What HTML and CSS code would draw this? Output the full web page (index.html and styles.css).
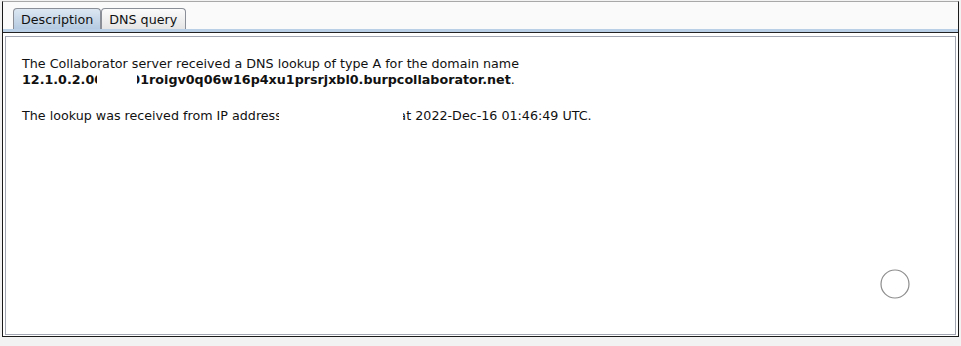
FILE: index.html
```html
<!DOCTYPE html>
<html>
<head>
<meta charset="utf-8">
<link rel="stylesheet" href="styles.css">
</head>
<body>
<div class="frame">
  <div class="tabs">
    <div class="tab active">Description</div>
    <div class="tab">DNS query</div>
  </div>
  <div class="strip"></div>
  <div class="panel">
    <div class="inner">
      <p class="para">The Collaborator server received a DNS lookup of type A for the domain name<br><b>12.1.0.2.0<span class="cut cut-r">0</span><span class="gap g1"></span><span class="cut cut-l"><span>0</span></span>1roigv0q06w16p4xu1prsrjxbl0.burpcollaborator.net</b>.</p>
      <p class="para">The lookup was received from IP addres<span class="cut cut-s">s</span><span class="gap g2"></span><span class="cut cut-a"><span>a</span></span>t 2022-Dec-16 01:46:49 UTC.</p>
      <svg class="spinner" width="30" height="30" viewBox="0 0 30 30"><circle cx="15" cy="15" r="14" fill="none" stroke="#8c8c8c" stroke-width="1.2"/></svg>
    </div>
  </div>
</div>
</body>
</html>
```
FILE: styles.css
```css
html, body { margin: 0; padding: 0; }
body {
  background: #f2f2f2;
  font-family: "DejaVu Sans", sans-serif;
  font-size: 12.7px;
  color: #111;
}
.frame {
  box-sizing: border-box;
  margin: 1px 0 0 2px;
  width: 957px;
  height: 336px;
  border: 1px solid #1a1a1a;
  border-top-color: #a8a8a8;
  background: #fafafa;
  display: flex;
  flex-direction: column;
}
.tabs {
  display: flex;
  padding: 6px 0 0 10px;
  height: 21px;
}
.tab {
  box-sizing: border-box;
  height: 22px;
  padding: 3px 7px 0 7px;
  border: 1px solid #8a8e96;
  border-bottom: none;
  border-radius: 4px 4px 0 0;
  background: linear-gradient(#fbfbfb, #e4e4e4);
  color: #111;
  line-height: 16px;
}
.tab.active {
  background: linear-gradient(#dce7f2, #b3c9e0);
}
.tab + .tab {
  padding-right: 8px;
}
.strip {
  height: 3px;
  background: #b8cfe5;
  border-bottom: 1px solid #222;
}
.panel {
  flex: 1;
  background: #ffffff;
  padding: 3px 2px 1px 2px;
  display: flex;
}
.inner {
  flex: 1;
  position: relative;
  border: 1px solid #a2a6b2;
  padding: 19px 16px 0 16px;
}
.para {
  margin: 0 0 20px 0;
  line-height: 16px;
}
.gap {
  display: inline-block;
  background: #fff;
}
.cut {
  display: inline-block;
  overflow: hidden;
  vertical-align: bottom;
  white-space: nowrap;
}
.cut-r { width: 3px; }
.cut-l { width: 3px; }
.cut-l span { display: inline-block; margin-left: -6px; }
.cut-s { width: 4px; }
.cut-a { width: 3px; }
.cut-a span { display: inline-block; margin-left: -5px; }
.g1 { width: 40px; }
.g2 { width: 124px; }
.spinner {
  position: absolute;
  right: 45px;
  bottom: 35px;
}
```
